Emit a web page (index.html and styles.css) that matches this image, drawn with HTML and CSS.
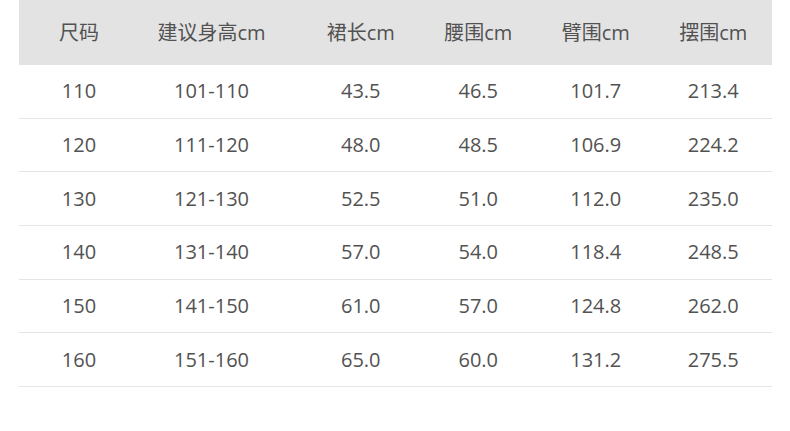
FILE: index.html
```html
<!DOCTYPE html>
<html lang="zh">
<head>
<meta charset="utf-8">
<link rel="stylesheet" href="styles.css">
</head>
<body>
<div class="table">
  <div class="row head">
    <div class="c">尺码</div><div class="c c2">建议身高cm</div><div class="c">裙长cm</div><div class="c">腰围cm</div><div class="c">臂围cm</div><div class="c">摆围cm</div>
  </div>
  <div class="row"><div class="c">110</div><div class="c c2">101-110</div><div class="c">43.5</div><div class="c">46.5</div><div class="c">101.7</div><div class="c">213.4</div></div>
  <div class="row"><div class="c">120</div><div class="c c2">111-120</div><div class="c">48.0</div><div class="c">48.5</div><div class="c">106.9</div><div class="c">224.2</div></div>
  <div class="row"><div class="c">130</div><div class="c c2">121-130</div><div class="c">52.5</div><div class="c">51.0</div><div class="c">112.0</div><div class="c">235.0</div></div>
  <div class="row"><div class="c">140</div><div class="c c2">131-140</div><div class="c">57.0</div><div class="c">54.0</div><div class="c">118.4</div><div class="c">248.5</div></div>
  <div class="row"><div class="c">150</div><div class="c c2">141-150</div><div class="c">61.0</div><div class="c">57.0</div><div class="c">124.8</div><div class="c">262.0</div></div>
  <div class="row"><div class="c">160</div><div class="c c2">151-160</div><div class="c">65.0</div><div class="c">60.0</div><div class="c">131.2</div><div class="c">275.5</div></div>
</div>
</body>
</html>
```
FILE: styles.css
```css
html, body {
  margin: 0;
  padding: 0;
  background: #ffffff;
}
body {
  font-family: "Open Sans", "Noto Sans CJK SC", sans-serif;
  color: #525252;
  font-size: 20px;
}
.table {
  margin-left: 19px;
  width: 753px;
}
.row {
  display: grid;
  grid-template-columns: 120px 163px repeat(4, 1fr);
  height: 53.67px;
  box-sizing: border-box;
  border-bottom: 1px solid #e5e5e5;
  align-items: center;
}
.row.head {
  height: 65px;
  background: #e3e3e3;
  border-bottom: none;
}
.c {
  text-align: center;
  line-height: 1;
}
.c2 {
  padding-right: 18px;
}
```
